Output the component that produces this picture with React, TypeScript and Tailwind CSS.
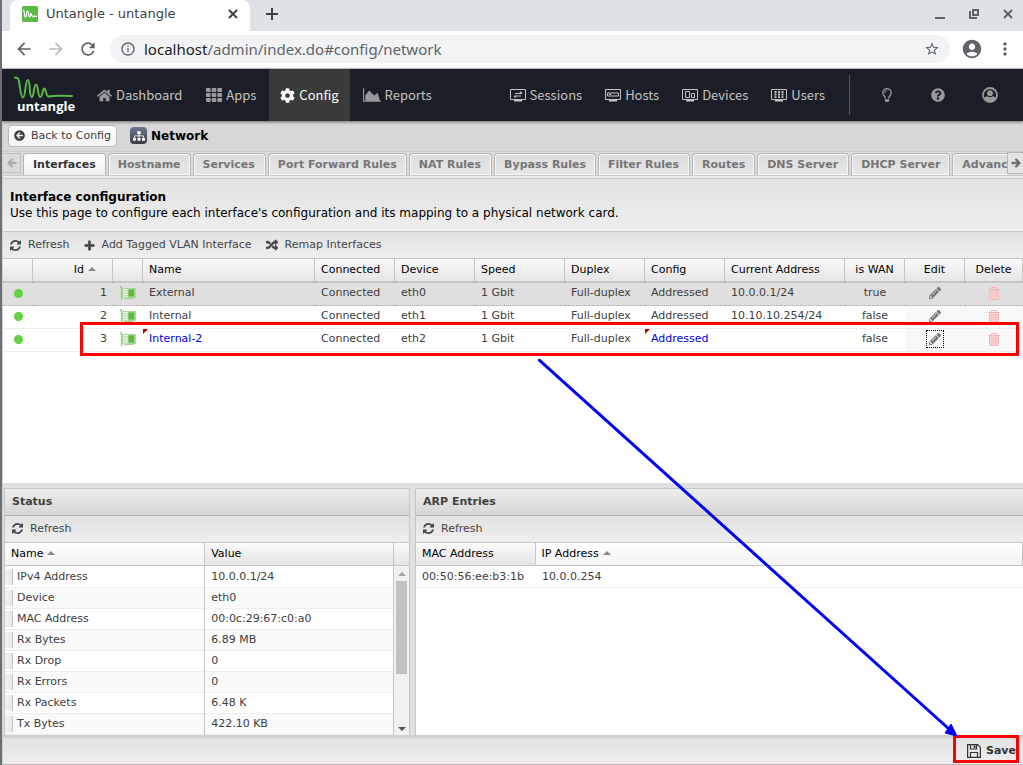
import React from "react";
import {
  FaArrowCircleLeft,
  FaArrowLeft,
  FaArrowRight,
  FaCog,
  FaHome,
  FaPencilAlt,
  FaPlus,
  FaQuestionCircle,
  FaRandom,
  FaRegLightbulb,
  FaSitemap,
  FaTh,
} from "react-icons/fa";
import {
  MdAccountCircle,
  MdArrowBack,
  MdArrowForward,
  MdInfoOutline,
  MdMoreVert,
  MdRefresh,
  MdStarBorder,
} from "react-icons/md";

const tabs = [
  "Hostname",
  "Services",
  "Port Forward Rules",
  "NAT Rules",
  "Bypass Rules",
  "Filter Rules",
  "Routes",
  "DNS Server",
  "DHCP Server",
  "Advanced",
];

const interfaces = [
  { id: 1, name: "External", device: "eth0", address: "10.0.0.1/24", wan: "true", selected: true, changed: false },
  { id: 2, name: "Internal", device: "eth1", address: "10.10.10.254/24", wan: "false", selected: false, changed: false },
  { id: 3, name: "Internal-2", device: "eth2", address: "", wan: "false", selected: false, changed: true },
];

const statusRows = [
  ["IPv4 Address", "10.0.0.1/24"],
  ["Device", "eth0"],
  ["MAC Address", "00:0c:29:67:c0:a0"],
  ["Rx Bytes", "6.89 MB"],
  ["Rx Drop", "0"],
  ["Rx Errors", "0"],
  ["Rx Packets", "6.48 K"],
  ["Tx Bytes", "422.10 KB"],
];

const RefreshIcon = () => (
  <svg viewBox="0 0 1536 1536" className="w-[11px] h-[11px] shrink-0" fill="currentColor">
    <path d="M1511 928q0 5-1 7-64 268-268 434.5t-478 166.5q-146 0-282.5-55t-243.5-157l-129 129q-19 19-45 19t-45-19-19-45v-448q0-26 19-45t45-19h448q26 0 45 19t19 45-19 45l-137 137q71 66 161 102t187 36q134 0 250-65t186-179q11-17 53-117 8-23 30-23h192q13 0 22.5 9.5t9.5 22.5zM1536 128v448q0 26-19 45t-45 19h-448q-26 0-45-19t-19-45 19-45l138-138q-148-137-349-137-134 0-250 65t-186 179q-11 17-53 117-8 23-30 23h-199q-13 0-22.5-9.5t-9.5-22.5v-7q65-268 270-434.5t480-166.5q146 0 284 55.5t245 156.5l130-129q19-19 45-19t45 19 19 45z" />
  </svg>
);

const AreaChartIcon = () => (
  <svg viewBox="0 0 2048 1536" className="w-[18px] h-[14px]" fill="currentColor">
    <path d="M2048 1408v128h-2048v-1536h128v1408h1920zM1664 512l256 896h-1664v-576l448-576 576 576z" />
  </svg>
);

const CloseIcon = () => (
  <svg viewBox="0 0 10 10" className="w-2.5 h-2.5" stroke="currentColor" strokeWidth="1.900">
    <path d="M1 1l8 8M9 1l-8 8" />
  </svg>
);

const NewTabIcon = () => (
  <svg viewBox="0 0 12 12" className="w-3 h-3" stroke="currentColor" strokeWidth="2">
    <path d="M6 0v12M0 6h12" />
  </svg>
);

const AccountIcon = () => (
  <svg viewBox="0 0 16 16" className="w-4 h-4" fill="currentColor">
    <circle cx="8" cy="8" r="7" fill="none" stroke="currentColor" strokeWidth="1.8" />
    <circle cx="8" cy="6.200" r="2.900" />
    <path d="M2 12.500C2.500 10.300 4 9.300 5.300 9.300c1.600 1.300 3.800 1.300 5.400 0 1.300 0 2.800 1 3.300 3.200L11 15H5z" />
  </svg>
);

// small monitor outline, each nav entry puts its own drawing on the screen
const Monitor = ({ children }: { children: React.ReactNode }) => (
  <svg viewBox="0 0 16 13" className="w-4 h-[13px]" fill="none" stroke="currentColor">
    <path d="M.5 .5h15v10h-15z" />
    <path d="M4 11.7h8" strokeWidth="1.6" />
    {children}
  </svg>
);

const CardIcon = () => (
  <svg viewBox="0 0 16 14" className="w-4 h-3.5 mx-auto">
    <path d="M0 1h1.500v13" fill="none" stroke="#9ccf8b" strokeWidth="1.300" />
    <path d="M2 2h14v10H2z" fill="#a9d99a" />
    <path d="M3 3.500h5M3 6h5M3 8.500h5M3 10.800h5M4 3v8M6.300 3v8" stroke="#eaf7e5" strokeWidth=".9" />
    <path d="M8.500 3.500h5.500v7H8.500z" fill="#5fb846" />
    <path d="M4 12.600h10" stroke="#9ccf8b" />
  </svg>
);

const TrashIcon = () => (
  <svg viewBox="0 0 12 13" className="w-3 h-[13px]" fill="#f9d0d0" stroke="#f2b4b4">
    <path d="M1.500 4h9v7.500q0 1-1 1h-7q-1 0-1-1z" />
    <path d="M0 2.500h12M3.500 2V.5h5V2" fill="none" />
    <path d="M4 5.500v5M6 5.500v5M8 5.500v5" stroke="#f6c0c0" />
  </svg>
);

const SaveIcon = () => (
  <svg viewBox="0 0 14 14" className="w-3.5 h-3.5" fill="none" stroke="#333" strokeWidth="1.2">
    <path d="M.6 .6h10l2.800 2.800v10H.6z" />
    <path d="M3.500 13V8.500h7V13M3.500 1v4h6V1" />
    <path d="M7.500 1.500v2.500" strokeWidth="1.800" />
  </svg>
);

const SortUp = () => (
  <span className="w-0 h-0 border-x-4 border-x-transparent border-b-4 border-b-[#888] inline-block ml-1 mb-0.5" />
);

const Logo = () => (
  <div className="w-[62px] h-10 relative">
    <svg viewBox="0 0 62 40" className="w-full h-full" fill="none">
      <path
        d="M.8 2.500C3.500 2.500 4.500 3 5.200 7.500 6.200 14 6.800 22.500 9 22.500c2.800 0 2-17.500 4.800-17.500 2.700 0 1.200 17 4 17 2.500 0 1.700-12.500 4.200-12.500 2.400 0 1.600 12.500 4.200 12.500 2.300 0 2.300-8.500 4-8.500 2 0 1.300 8 4.800 8 6-1.200 12-1 23-.5"
        stroke="#5cb548"
        strokeWidth="2"
        strokeLinecap="round"
        strokeLinejoin="round"
      />
    </svg>
    <span className="absolute left-[3px] bottom-px text-[13px] leading-4 font-bold font-['Open_Sans',sans-serif] text-white">
      untangle
    </span>
  </div>
);

const NavItem = ({ icon, label, active }: { icon: React.ReactNode; label: string; active?: boolean }) => (
  <a
    href="#"
    className={`flex items-center gap-1 h-full px-[11px] ${active ? "bg-[#3a3a3a] text-white" : "text-[#c3c3c3]"}`}
  >
    <span className={active ? "text-white" : "text-[#999]"}>{icon}</span>
    {label}
  </a>
);

const DeviceItem = ({ label, children }: { label: string; children: React.ReactNode }) => (
  <a href="#" className="flex items-center gap-1 text-[#c3c3c3]">
    <Monitor>{children}</Monitor>
    {label}
  </a>
);

const ToolButton = ({ icon, label }: { icon: React.ReactNode; label: string }) => (
  <button className="flex items-center gap-[7px] text-[#444]">
    {icon}
    {label}
  </button>
);

const Changed = () => (
  <span className="absolute left-0 top-0 border-t-[5px] border-t-[#b00000] border-r-[5px] border-r-transparent" />
);

const Browser = () => (
  <div>
    <div className="flex h-[31px] bg-[#dee1e6] text-[#3c4043]">
      <div className="flex items-center w-60 ml-2 px-3 pb-1 bg-white rounded-t-lg text-[13px]">
        <svg viewBox="0 0 16 16" className="w-4 h-4 mr-2">
          <rect width="16" height="16" rx="1.500" fill="#5cb946" />
          <path d="M1 4c2 0 1 7 2.500 7S4 5 5.500 5 6 11 7.500 11 8 7.500 9 7.500s.5 3.500 2 3.500 1-2 2-.7h2" fill="none" stroke="#fff" strokeWidth="1.200" />
        </svg>
        <span className="flex-1">Untangle - untangle</span>
        <button aria-label="Close tab">
          <CloseIcon />
        </button>
      </div>
      <button aria-label="New tab" className="ml-4 mb-1">
        <NewTabIcon />
      </button>
      <div className="flex items-center gap-6 ml-auto mr-2.5 pb-1 text-[#5f6368]">
        <button aria-label="Minimize" className="w-2.5 h-0.5 mt-2 bg-[#5f6368]" />
        <button aria-label="Restore">
          <svg viewBox="0 0 10 10" className="w-2.5 h-2.5" fill="none" stroke="currentColor" strokeWidth="2">
            <path d="M4 1h5v5H4z" />
            <path d="M1 2v7h7" />
          </svg>
        </button>
        <button aria-label="Close window">
          <CloseIcon />
        </button>
      </div>
    </div>
    <div className="flex items-center h-[37px] pb-0.5 bg-white text-[#5f6368] pl-3 pr-2">
      <MdArrowBack size={20} />
      <MdArrowForward size={20} className="ml-3 text-[#bbb]" />
      <MdRefresh size={20} className="ml-3" />
      <div className="flex items-center flex-1 h-7 ml-3 pl-2.5 pr-2.5 rounded-full bg-[#f1f3f4]">
        <MdInfoOutline size={16} className="mr-2" />
        <div className="flex-1 font-['Noto_Sans',sans-serif] text-[15px]">
          <span className="text-[#202124]">localhost</span>/admin/index.do#config/network
        </div>
        <MdStarBorder size={16} />
      </div>
      <MdAccountCircle size={22} className="ml-[11px]" />
      <MdMoreVert size={20} className="ml-3" />
    </div>
    <div className="h-px bg-[#c8c8c8]" />
  </div>
);

const NavBar = () => (
  <nav className="relative z-10 flex items-center h-[52px] pl-3 bg-[#1b1e26] shadow-[0_1px_3px_rgba(0,0,0,0.5)] font-['Noto_Sans_CJK_SC',sans-serif] text-[13px]">
    <Logo />
    <div className="flex gap-0.5 h-full ml-2.5">
      <NavItem icon={<FaHome size={15} />} label="Dashboard" />
      <NavItem icon={<FaTh size={16} />} label="Apps" />
      <NavItem icon={<FaCog size={15} />} label="Config" active />
      <NavItem icon={<AreaChartIcon />} label="Reports" />
    </div>
    <div className="flex items-center gap-[23px] ml-auto mr-6">
      <DeviceItem label="Sessions">
        <path d="M5 4.500h7M10 2.700l2 1.800M4 7h7M4 7l2 1.600" strokeWidth="1.200" />
      </DeviceItem>
      <DeviceItem label="Hosts">
        <path d="M2.500 4h11v3h-11zM4 5.500h2" />
      </DeviceItem>
      <DeviceItem label="Devices">
        <path d="M3.500 2.500h4v6h-4zM9.500 4.500h3v4h-3z" />
      </DeviceItem>
      <DeviceItem label="Users">
        <path d="M4.500 2v7M8 2v7M11.500 2v7" strokeWidth="2" strokeDasharray="2 .6" />
      </DeviceItem>
    </div>
    <div className="flex items-center justify-between h-10 w-[174px] pl-[30px] pr-[25px] border-l border-[#555] text-[#999]">
      <a href="#" aria-label="Suggest idea"><FaRegLightbulb size={14} /></a>
      <a href="#" aria-label="Help"><FaQuestionCircle size={14} /></a>
      <a href="#" aria-label="Account"><AccountIcon /></a>
    </div>
  </nav>
);

const headCell =
  "border-r border-b border-[#c5c5c5] bg-linear-to-b from-[#fbfbfb] to-[#e6e4e4] font-normal text-left px-1.5 text-black";
const headCellCenter =
  "border-r border-b border-[#c5c5c5] bg-linear-to-b from-[#fbfbfb] to-[#e6e4e4] font-normal text-center text-black";

const InterfaceTable = () => (
  <table className="w-full table-fixed border-separate border-spacing-0 text-[#404040]">
    <thead>
      <tr className="h-[23px]">
        <th className={`w-[30px] ${headCell}`} />
        <th className={`w-20 ${headCell}`}>
          <div className="flex items-center justify-end pr-2.5">
            Id
            <SortUp />
          </div>
        </th>
        <th className={`w-[30px] ${headCell}`} />
        <th className={headCell}>Name</th>
        <th className={`w-20 ${headCell}`}>Connected</th>
        <th className={`w-20 ${headCell}`}>Device</th>
        <th className={`w-[90px] ${headCell}`}>Speed</th>
        <th className={`w-20 ${headCell}`}>Duplex</th>
        <th className={`w-20 ${headCell}`}>Config</th>
        <th className={`w-[120px] ${headCell}`}>Current Address</th>
        <th className={`w-[60px] ${headCellCenter}`}>is WAN</th>
        <th className={`w-[60px] ${headCellCenter}`}>Edit</th>
        <th className={`w-[58px] ${headCellCenter}`}>Delete</th>
      </tr>
    </thead>
    <tbody>
      {interfaces.map((row) => (
        <tr
          key={row.id}
          className={`*:border-b *:pb-0.5 ${
            row.selected
              ? "h-6 bg-[#dfdfdf] *:border-t *:border-dotted *:border-[#aaa]"
              : "h-[23px] *:border-[#ededed]"
          }`}
        >
          <td>
            <span className="block w-[9px] h-[9px] mx-auto rounded-full bg-[#62d243]" />
          </td>
          <td className="text-right pr-1.5">{row.id}</td>
          <td>
            <CardIcon />
          </td>
          <td className={`relative px-1.5 ${row.changed ? "text-[#0000e6]" : ""}`}>
            {row.changed && <Changed />}
            {row.name}
          </td>
          <td className="px-1.5">Connected</td>
          <td className="px-1.5">{row.device}</td>
          <td className="px-1.5">1 Gbit</td>
          <td className="px-1.5">Full-duplex</td>
          <td className={`relative px-1.5 ${row.changed ? "text-[#0000e6]" : ""}`}>
            {row.changed && <Changed />}
            Addressed
          </td>
          <td className="px-1.5">{row.address}</td>
          <td className="text-center">{row.wan}</td>
          <td className={row.selected ? "" : "bg-[#f8f8f8]"}>
            <button
              aria-label="Edit"
              className={`flex items-center justify-center w-[18px] h-[18px] mx-auto text-[#777] ${row.changed ? "border border-dotted border-black" : ""}`}
            >
              <FaPencilAlt size={12} />
            </button>
          </td>
          <td className={row.selected ? "" : "bg-[#f8f8f8]"}>
            <button aria-label="Delete" className="flex items-center justify-center w-[18px] h-[18px] mx-auto">
              <TrashIcon />
            </button>
          </td>
        </tr>
      ))}
    </tbody>
  </table>
);

const PanelTop = ({ title }: { title: string }) => (
  <>
    <h2 className="flex items-center h-[27px] pl-[7px] border-b border-[#b8b0b0] bg-linear-to-b from-[#eeeeee] to-[#d6d6d6] font-bold">
      {title}
    </h2>
    <div className="flex items-center h-[27px] pl-[7px] border-b border-[#c5c5c5] bg-linear-to-b from-[#e2e2e2] to-[#eeeeee]">
      <ToolButton icon={<RefreshIcon />} label="Refresh" />
    </div>
  </>
);

const StatusPanel = () => (
  <section className="flex flex-col w-[406px] border-x border-t border-[#c5c5c5] bg-white">
    <PanelTop title="Status" />
    <div className="flex flex-1">
      <table className="flex-1 table-fixed border-collapse">
        <thead>
          <tr className="h-[23px] border-b border-[#c5c5c5] text-black">
            <th className="w-[200px] pl-1.5 font-normal text-left bg-linear-to-b from-white to-[#f2f2f2]">
              Name
              <SortUp />
            </th>
            <th className="w-[189px] pl-1.5 border-x border-[#c5c5c5] font-normal text-left bg-linear-to-b from-[#fbfbfb] to-[#e6e4e4]">
              Value
            </th>
          </tr>
        </thead>
        <tbody>
          {statusRows.map(([name, value]) => (
            <tr key={name} className="h-[21px] first:h-[22px] border-b border-[#ededed] even:bg-[#fafafa]">
              <td>
                <div className="flex items-center gap-1">
                  <span className="w-2 h-4 border-r border-[#c5c5c5] bg-linear-to-r from-[#f2f2f4] to-[#e6e7e9]" />
                  {name}
                </div>
              </td>
              <td className="pl-1.5 border-x border-[#c5c5c5]">{value}</td>
            </tr>
          ))}
        </tbody>
      </table>
      <div className="flex flex-col w-[15px]">
        <div className="h-[23px] border-b border-[#c5c5c5] bg-linear-to-b from-[#fbfbfb] to-[#e6e4e4]" />
        <div className="flex flex-col items-center flex-1 pt-1.5 pb-1 bg-[#f1f1f1]">
          <span className="border-x-4 border-x-transparent border-b-4 border-b-[#a3a3a3]" />
          <div className="w-[11px] h-[93px] mt-[5px] bg-[#c1c1c1]" />
          <span className="mt-auto border-x-4 border-x-transparent border-t-4 border-t-[#505050]" />
        </div>
      </div>
    </div>
  </section>
);

const ArpPanel = () => (
  <section className="flex-1 border-l border-t border-[#c5c5c5] bg-white">
    <PanelTop title="ARP Entries" />
    <table className="w-full table-fixed border-collapse">
      <thead>
        <tr className="h-[23px] border-b border-[#c5c5c5] text-black">
          <th className="w-[119px] pl-1.5 border-r border-[#c5c5c5] font-normal text-left bg-linear-to-b from-[#fbfbfb] to-[#e6e4e4]">
            MAC Address
          </th>
          <th className="pl-1.5 border-r border-[#c5c5c5] font-normal text-left bg-linear-to-b from-white to-[#f2f2f2]">
            IP Address
            <SortUp />
          </th>
        </tr>
      </thead>
      <tbody>
        <tr className="h-[22px] border-b border-[#ededed]">
          <td className="pl-1.5">00:50:56:ee:b3:1b</td>
          <td className="pl-[7px]">10.0.0.254</td>
        </tr>
      </tbody>
    </table>
  </section>
);

const App = () => {
  return (
    <div className="relative flex flex-col min-h-screen overflow-hidden border-l-2 border-[#6c6f73] bg-white font-['DejaVu_Sans',sans-serif] text-[11px] leading-4 text-[#404040]">
      <Browser />
      <NavBar />

      <main className="flex flex-col flex-1 border-l border-[#d0d0d0]">
        <div className="flex items-center h-[30px] pb-px pl-[5px] bg-[#d7d7d7]">
          <button className="flex items-center gap-1.5 h-[22px] px-[5px] border border-[#bcbcbc] rounded-sm bg-linear-to-b from-white to-[#f3f3f3]">
            <FaArrowCircleLeft size={11} />
            Back to Config
          </button>
          <span className="flex items-center justify-center w-[17px] h-[17px] ml-[13px] mr-1 rounded-sm bg-linear-to-b from-[#6d7890] to-[#363c48] text-white">
            <FaSitemap size={12} />
          </span>
          <h1 className="text-xs leading-4 font-bold text-black">Network</h1>
        </div>

        <div className="flex h-6 border-t border-[#cacaca] bg-[#dcdcdc] overflow-hidden">
          <button aria-label="Scroll left" className="flex items-center justify-center shrink-0 w-[18px] h-5 mt-px mr-0.5 border border-l-0 border-[#c0c0c0] text-[#aaa]">
            <FaArrowLeft size={10} strokeWidth={40} />
          </button>
          <div className="flex flex-1 min-w-0 gap-0.5 pt-px overflow-hidden font-bold whitespace-nowrap">
            <button className="px-[9px] border border-b-0 border-[#b5b5b5] rounded-t bg-linear-to-b from-white to-[#f0f0f0] text-[#333]">
              Interfaces
            </button>
            {tabs.map((tab) => (
              <button
                key={tab}
                className="pl-[9px] pr-[9px] odd:pr-2.5 border border-b-0 border-[#b5b5b5] rounded-t bg-linear-to-b from-[#dcdcdc] to-[#e8e8e8] inset-shadow-[0_0_0_1px_#f8f8f8] text-[#757575]"
              >
                {tab}
              </button>
            ))}
          </div>
          <button aria-label="Scroll right" className="flex items-center justify-center shrink-0 w-4 h-[22px] border border-r-0 border-[#b5b5b5] bg-[#e4e4e4] text-[#666]">
            <FaArrowRight size={10} strokeWidth={40} />
          </button>
        </div>
        <div className="h-1 border-y border-[#cacaca] bg-[#ebebeb]" />

        <div className="h-[53px] pt-2.5 pl-[7px] border-b border-[#cacaca] bg-linear-to-b from-[#e2e2e2] to-[#eeeeee] text-xs leading-4 text-black">
          <h2 className="font-bold">Interface configuration</h2>
          <p>Use this page to configure each interface's configuration and its mapping to a physical network card.</p>
        </div>
        <div className="flex items-center gap-3.5 h-[27px] pl-[7px] border-b border-[#c5c5c5] bg-linear-to-b from-[#e2e2e2] to-[#eeeeee]">
          <ToolButton icon={<RefreshIcon />} label="Refresh" />
          <ToolButton icon={<FaPlus size={11} strokeWidth={30} />} label="Add Tagged VLAN Interface" />
          <ToolButton icon={<FaRandom size={12} strokeWidth={20} />} label="Remap Interfaces" />
        </div>

        <div className="flex-1">
          <InterfaceTable />
        </div>

        <div className="h-[5px] bg-[#e0e0e0]" />
        <div className="flex gap-[5px] pl-px bg-[#e0e0e0]">
          <StatusPanel />
          <ArpPanel />
        </div>

        <footer className="flex items-center justify-end h-[30px] pr-[7px] border-t-3 border-b border-t-[#d0d0d0] border-b-[#c4b4b6] bg-linear-to-b from-[#e2e2e2] to-[#eeeeee]">
          <button className="flex items-center gap-[5px] font-bold text-[#333]">
            <SaveIcon />
            Save
          </button>
        </footer>
      </main>

      {/* callouts over the page */}
      <div className="absolute left-[78px] right-1 top-[322px] h-[34px] border-3 border-[#ff0000]" />
      <div className="absolute right-1 bottom-0.5 w-[66px] h-7 border-3 border-[#ff0000]" />
      <svg viewBox="0 0 420 378" className="absolute left-[536px] top-[359px] w-[420px] h-[378px]">
        <path d="M0 0L411 370" stroke="#0000ff" strokeWidth="3" />
        <path d="M419 377L407 374L413 365z" fill="#0000ff" stroke="#0000ff" />
      </svg>
    </div>
  );
};

export default App;
